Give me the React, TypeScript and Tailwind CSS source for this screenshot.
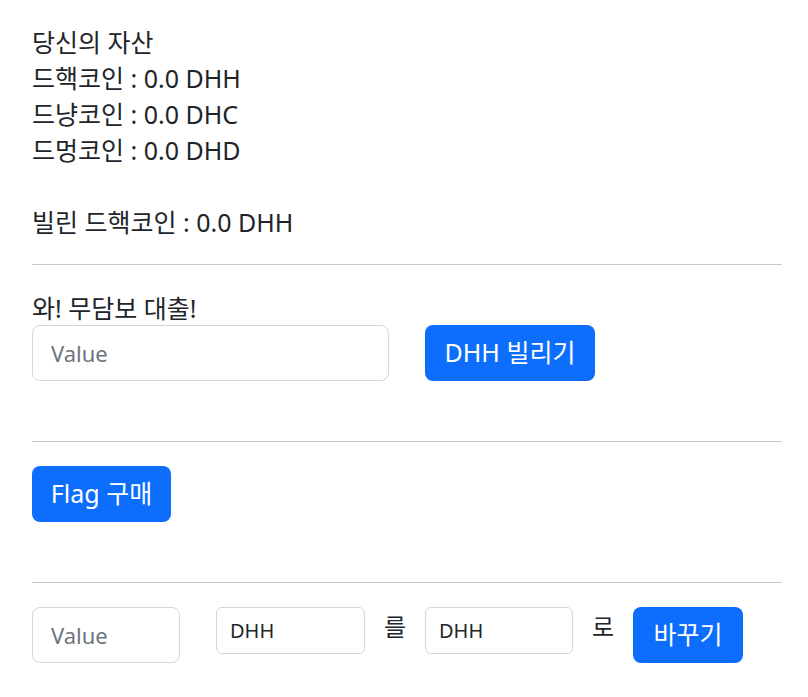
export default function App() {
	return (
		<div className="min-h-screen bg-white text-[#212529] font-['Noto_Sans','Noto_Sans_CJK_KR',sans-serif]">
			<div className="w-[750px] ml-8 pt-6">
				{/* Assets */}
				<div className="text-[25px] leading-[36px]">
					<div>당신의 자산</div>
					<div>드핵코인 : 0.0 DHH</div>
					<div>드냥코인 : 0.0 DHC</div>
					<div>드멍코인 : 0.0 DHD</div>
					<div className="h-[36px]" />
					<div>빌린 드핵코인 : 0.0 DHH</div>
				</div>

				<hr className="mt-6 border-0 border-t border-[#c9c9c9]" />

				{/* Loan */}
				<div className="mt-[26px] text-[25px] leading-[34px]">와! 무담보 대출!</div>
				<div className="flex gap-9">
					<input
						placeholder="Value"
						className="w-[357px] h-[56px] px-[18px] rounded-lg border border-[#d3d6da] text-[22px] placeholder:text-[#6c757d] outline-none"
					/>
					<button className="w-[170px] h-[56px] rounded-lg bg-[#0d6efd] text-white text-[25px]">DHH 빌리기</button>
				</div>

				<hr className="mt-[60px] border-0 border-t border-[#c9c9c9]" />

				{/* Flag */}
				<div className="mt-6">
					<button className="w-[139px] h-[56px] rounded-lg bg-[#0d6efd] text-white text-[25px]">Flag 구매</button>
				</div>

				<hr className="mt-[60px] border-0 border-t border-[#c9c9c9]" />

				{/* Swap */}
				<div className="mt-6 flex items-start">
					<input
						placeholder="Value"
						className="w-[148px] h-[56px] px-[18px] rounded-lg border border-[#d3d6da] text-[22px] placeholder:text-[#6c757d] outline-none"
					/>
					<div className="ml-9 w-[149px] h-[47px] px-[13px] flex items-center rounded-md border border-[#d3d6da] text-[20px]">DHH</div>
					<div className="w-[60px] text-center text-[24px] leading-[40px]">를</div>
					<div className="w-[148px] h-[47px] px-[13px] flex items-center rounded-md border border-[#d3d6da] text-[20px]">DHH</div>
					<div className="w-[60px] text-center text-[24px] leading-[40px]">로</div>
					<button className="w-[110px] h-[56px] rounded-lg bg-[#0d6efd] text-white text-[25px]">바꾸기</button>
				</div>
			</div>
		</div>
	);
}
